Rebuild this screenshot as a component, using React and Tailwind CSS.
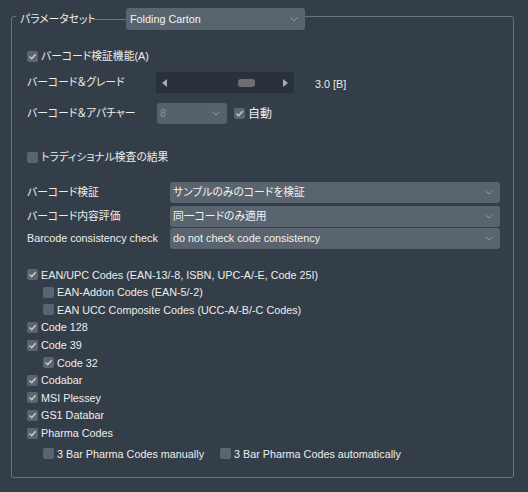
import React from 'react';

const jp = {
  fontFamily: '"Liberation Sans", "Noto Sans CJK JP", sans-serif',
  fontFeatureSettings: '"palt"',
};

function Chevron({ className = '' }) {
  return (
    <svg width="8" height="5" viewBox="0 0 8 5" className={className}>
      <path d="M0.5 0.5 L4 4 L7.5 0.5" fill="none" stroke="currentColor" strokeWidth="1" />
    </svg>
  );
}

function Check({ checked }) {
  return (
    <span className="flex h-[11px] w-[11px] shrink-0 items-center justify-center rounded-[2px] bg-[#5b656f]">
      {checked && (
        <svg width="9" height="9" viewBox="0 0 9 9">
          <path d="M1.5 4.5 L3.7 6.7 L7.6 2.2" fill="none" stroke="#c9ccce" strokeWidth="1.5" />
        </svg>
      )}
    </span>
  );
}

function CheckRow({ checked, label, indent = false, className = '' }) {
  return (
    <div className={`flex h-[17.6px] items-center gap-[3px] ${indent ? 'pl-[16px]' : ''} ${className}`}>
      <Check checked={checked} />
      <span className="whitespace-nowrap">{label}</span>
    </div>
  );
}

function Select({ value, disabled = false, className = '' }) {
  const tone = disabled ? 'bg-[#56616b] text-[#87909a]' : 'bg-[#59646e] text-[#f2f2f2]';
  return (
    <div className={`flex h-[21px] items-center justify-between rounded-[3px] pl-[3px] pr-[7px] ${tone} ${className}`}>
      <span className="whitespace-nowrap">{value}</span>
      <Chevron className="text-[#8f979e]" />
    </div>
  );
}

export default function App() {
  return (
    <div className="h-[492px] w-[528px] bg-[#343e48] pl-[11px] pt-[3px] text-[10.8px] text-[#ededed]" style={jp}>
      <fieldset className="m-0 h-[475px] w-[503px] rounded-[3px] border border-[#6d7379] p-0">
        <legend className="ml-[4px] flex items-center pt-[5px]">
          <span className="w-[77px] whitespace-nowrap pl-[4px]">パラメータセット</span>
          <span className="h-px w-[33px] bg-[#6d7379]" />
          <Select value="Folding Carton" className="h-[22px] w-[179px] pl-[4px]" />
        </legend>

        <div className="pl-[15px]">
          <CheckRow checked label="バーコード検証機能(A)" className="mt-[17px] h-[18px]" />

          <div className="mt-[7px] flex h-[21px] items-center">
            <span className="w-[129px] whitespace-nowrap">バーコード＆グレード</span>
            <div className="flex h-[21px] w-[138px] items-center justify-between bg-[#29313a] px-[6px]">
              <svg width="5" height="8" viewBox="0 0 5 8"><path d="M5 0 L0 4 L5 8 Z" fill="#a7adb2" /></svg>
              <span className="ml-[71px] h-[8px] w-[17px] rounded-[3px] bg-[#6c6e70]" />
              <span className="flex-1" />
              <svg width="5" height="8" viewBox="0 0 5 8"><path d="M0 0 L5 4 L0 8 Z" fill="#a7adb2" /></svg>
            </div>
            <span className="ml-[21px] mt-[3px]">3.0 [B]</span>
          </div>

          <div className="mt-[10px] flex h-[21px] items-center">
            <span className="w-[130px] whitespace-nowrap">バーコード＆アパチャー</span>
            <Select disabled value="8" className="w-[70px]" />
            <span className="ml-[7px] flex items-center gap-[3px]">
              <Check checked />
              <span className="text-[12px]">自動</span>
            </span>
          </div>

          <CheckRow label="トラディショナル検査の結果" className="mt-[24px] h-[18px]" />

          <div className="mt-[16px] flex h-[21px] items-center">
            <span className="w-[143px] whitespace-nowrap">バーコード検証</span>
            <Select value="サンプルのみのコードを検証" className="w-[330px]" />
          </div>
          <div className="mt-[3px] flex h-[21px] items-center">
            <span className="w-[143px] whitespace-nowrap">バーコード内容評価</span>
            <Select value="同一コードのみ適用" className="w-[330px]" />
          </div>
          <div className="mt-[1px] flex h-[21px] items-center">
            <span className="w-[143px] whitespace-nowrap">Barcode consistency check</span>
            <Select value="do not check code consistency" className="w-[330px]" />
          </div>

          <div className="mt-[17px]">
            <CheckRow checked label="EAN/UPC Codes (EAN-13/-8, ISBN, UPC-A/-E, Code 25I)" />
            <CheckRow indent label="EAN-Addon Codes (EAN-5/-2)" />
            <CheckRow indent label="EAN UCC Composite Codes (UCC-A/-B/-C Codes)" />
            <CheckRow checked label="Code 128" />
            <CheckRow checked label="Code 39" />
            <CheckRow checked indent label="Code 32" />
            <CheckRow checked label="Codabar" />
            <CheckRow checked label="MSI Plessey" />
            <CheckRow checked label="GS1 Databar" />
            <CheckRow checked label="Pharma Codes" />
            <div className="mt-[3px] flex h-[18px] items-center pl-[16px]">
              <span className="flex w-[177px] items-center gap-[3px]">
                <Check />
                <span className="whitespace-nowrap">3 Bar Pharma Codes manually</span>
              </span>
              <span className="flex items-center gap-[3px]">
                <Check />
                <span className="whitespace-nowrap">3 Bar Pharma Codes automatically</span>
              </span>
            </div>
          </div>
        </div>
      </fieldset>
    </div>
  );
}
